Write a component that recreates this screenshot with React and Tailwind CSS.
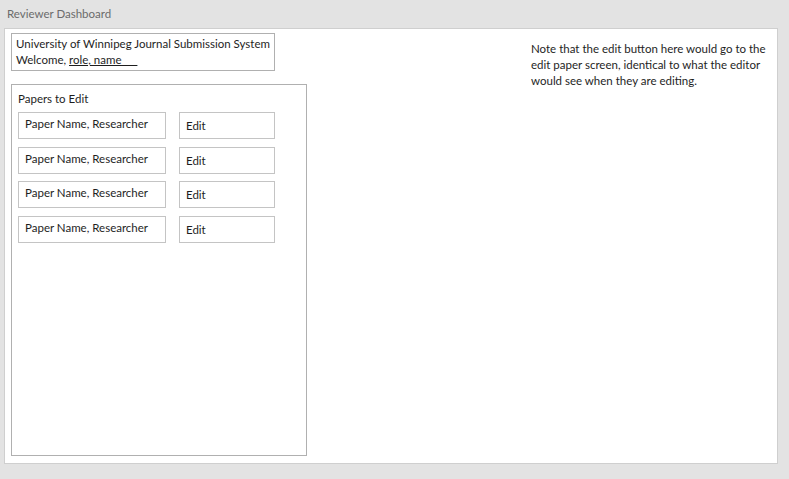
export default function App() {
  const rows = [0, 1, 2, 3];
  return (
    <div
      className="w-[789px] h-[479px] bg-[#e3e3e3] text-[#1e1e1e] text-[11.5px] leading-[16px] flex flex-col"
      style={{ fontFamily: "Lato, sans-serif" }}
    >
      <div className="h-[28px] pl-[7px] pt-[6px] text-[#6b6b6b]">Reviewer Dashboard</div>
      <div className="ml-[4px] w-[774px] h-[436px] bg-white border border-[#cfcfcf] flex">
        <div className="pl-[6px] pt-[4px] flex flex-col">
          <div className="w-[264px] h-[38px] border border-[#b0b0b0] pl-[4px] pt-[2px] whitespace-nowrap">
            <div>University of Winnipeg Journal Submission System</div>
            <div>
              Welcome, <span className="underline">role, name___</span>
            </div>
          </div>
          <div className="mt-[13px] w-[296px] h-[372px] border border-[#b0b0b0] px-[6px] pt-[6px]">
            <div className="mb-[5px]">Papers to Edit</div>
            <div className="flex flex-col gap-[7.5px]">
              {rows.map((r) => (
                <div key={r} className="flex gap-[13px]">
                  <div className="w-[148px] h-[27px] border border-[#c4c4c4] pl-[6px] pt-[3px] whitespace-nowrap">
                    Paper Name, Researcher
                  </div>
                  <div className="w-[96px] h-[27px] border border-[#c4c4c4] pl-[6px] pt-[5px]">Edit</div>
                </div>
              ))}
            </div>
          </div>
        </div>
        <div className="ml-[224px] pt-[12px] whitespace-nowrap">
          <div>Note that the edit button here would go to the</div>
          <div>edit paper screen, identical to what the editor</div>
          <div>would see when they are editing.</div>
        </div>
      </div>
    </div>
  );
}
